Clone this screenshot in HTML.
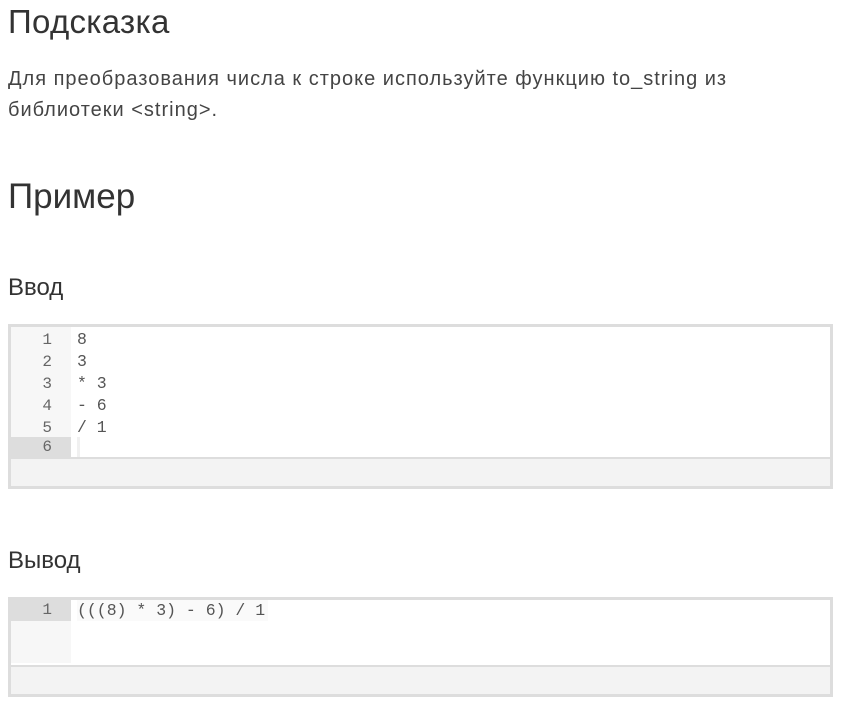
<!DOCTYPE html>
<html><head><meta charset="utf-8"><style>
body{margin:0;background:#fff;font-family:"Liberation Sans","DejaVu Sans",sans-serif;color:#333;width:849px;height:706px;overflow:hidden;position:relative}
.a{position:absolute;left:8px;margin:0;white-space:nowrap}
.box{position:absolute;left:8px;width:819px;border:3px solid #ddd;border-top-width:3px;background:#fff}
.gut{position:absolute;left:0;top:0;width:60px;background:#f7f7f7}
.ln{position:absolute;left:0;width:60px;height:22px;line-height:22px;text-align:right;box-sizing:border-box;padding-right:19px;font-family:"Liberation Mono","DejaVu Sans Mono",monospace;font-size:16px;color:#666}
.cd{position:absolute;left:66px;height:22px;line-height:22px;font-family:"Liberation Mono","DejaVu Sans Mono",monospace;font-size:16.5px;color:#555;white-space:pre}
.bar{position:absolute;left:0;right:0;bottom:0;background:#f3f3f3;border-top:2px solid #ddd}
</style></head><body>
<h1 class="a" style="top:3px;font-size:33px;font-weight:normal;letter-spacing:0.3px">Подсказка</h1>
<p class="a" style="top:64px;font-size:20px;line-height:31px;color:#444;letter-spacing:1px">Для преобразования числа к строке используйте функцию to_string из<br>библиотеки &lt;string&gt;.</p>
<h1 class="a" style="top:177px;font-size:35px;font-weight:normal">Пример</h1>
<h3 class="a" style="top:274px;font-size:24px;font-weight:normal">Ввод</h3>
<div class="box" style="top:324px;height:159px">
<div class="gut" style="height:130px"></div>
<div class="ln" style="top:2px">1</div><div class="cd" style="top:2px">8</div>
<div class="ln" style="top:24px">2</div><div class="cd" style="top:24px">3</div>
<div class="ln" style="top:46px">3</div><div class="cd" style="top:46px">* 3</div>
<div class="ln" style="top:68px">4</div><div class="cd" style="top:68px">- 6</div>
<div class="ln" style="top:90px">5</div><div class="cd" style="top:90px">/ 1</div>
<div class="ln" style="top:110px;height:20px;line-height:20px;background:#ddd">6</div>
<div style="position:absolute;left:66px;top:110px;width:3px;height:20px;background:#f0f0f0"></div>
<div class="bar" style="height:27px"></div>
</div>
<h3 class="a" style="top:547px;font-size:24px;font-weight:normal">Вывод</h3>
<div class="box" style="top:597px;height:94px">
<div class="gut" style="height:63px"></div>
<div class="ln" style="top:0;height:21px;line-height:21px;background:#ddd">1</div>
<div class="cd" style="top:0;height:21px;line-height:21px;background:#fafafa;padding-right:3px">(((8) * 3) - 6) / 1</div>
<div class="bar" style="height:27px"></div>
</div>
</body></html>
